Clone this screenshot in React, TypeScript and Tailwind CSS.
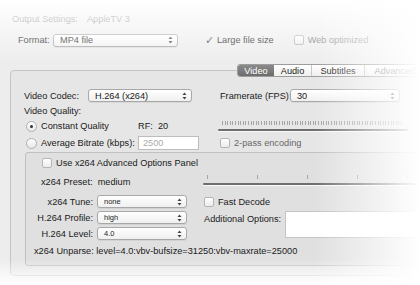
import React from "react";

function Arrows() {
  return (
    <svg width="5" height="8" viewBox="0 0 5 8" className="shrink-0">
      <path d="M2.5 0.5 L4.5 3 L0.5 3 Z" fill="#444" />
      <path d="M2.5 7.5 L4.5 5 L0.5 5 Z" fill="#444" />
    </svg>
  );
}

function Popup({
  text,
  className,
  small,
}: {
  text: string;
  className: string;
  small?: boolean;
}) {
  return (
    <div
      className={`flex h-[13px] items-center justify-between rounded-[3px] border border-[#a8a8a8] bg-gradient-to-b from-white to-[#f0f0f0] pl-[6px] pr-[4px] shadow-[0_1px_0_rgba(0,0,0,0.06)] ${className}`}
    >
      <span className={small ? "text-[7.5px]" : ""}>{text}</span>
      <Arrows />
    </div>
  );
}

function Check({ on }: { on?: boolean }) {
  return (
    <span className="flex h-[10px] w-[10px] shrink-0 items-center justify-center rounded-[2px] border border-[#b5b5b5] bg-gradient-to-b from-white to-[#ececec]">
      {on && <span className="text-[9px] leading-none text-[#333]">✓</span>}
    </span>
  );
}

function Radio({ on }: { on?: boolean }) {
  return (
    <span className="flex h-[11px] w-[11px] shrink-0 items-center justify-center rounded-full border border-[#b0b0b0] bg-gradient-to-b from-white to-[#e8e8e8]">
      {on && <span className="h-[3px] w-[3px] rounded-full bg-[#333]" />}
    </span>
  );
}

function Slider({ ticks, gap }: { ticks: number; gap: string }) {
  return (
    <div className="flex flex-col">
      <div className={`flex h-[5px] items-start pl-[4px] ${gap}`}>
        {Array.from({ length: ticks }).map((_, i) => (
          <span key={i} className="h-[4px] w-px shrink-0 bg-[#a5a5a5]" />
        ))}
      </div>
      <div className="mt-[3px] h-[2px] w-full rounded-full bg-[#6e6e6e] shadow-[0_1px_0_#fafafa]" />
    </div>
  );
}

export default function App() {
  return (
    <div className="relative h-[285px] w-[420px] overflow-hidden whitespace-nowrap bg-[#ededed] font-['Liberation_Sans',Arial,sans-serif] text-[9.2px] leading-[12px] text-[#1a1a1a]">
      <div className="flex gap-[9px] pl-[12px] pt-[13px] text-[#666]">
        <span>Output Settings:</span>
        <span>AppleTV 3</span>
      </div>

      <div className="mt-[8px] flex h-[14px] items-center pl-[18px]">
        <span className="w-[35px]">Format:</span>
        <Popup text="MP4 file" className="w-[125px]" />
        <span className="ml-[27px] text-[11px] text-[#444]">✓</span>
        <span className="ml-[3px]">Large file size</span>
        <span className="ml-[20px]">
          <Check />
        </span>
        <span className="ml-[4px] text-[#777]">Web optimized</span>
      </div>

      <div className="ml-[10px] mt-[23px] w-[440px] rounded-[4px] border border-[#c4c4c4] bg-[#e6e6e6] pb-[9px]">
        <div className="-mt-[7px] flex h-[13px] pl-[226px]">
          <div className="flex overflow-hidden rounded-[3px] border border-[#9d9d9d] bg-gradient-to-b from-white to-[#efefef]">
            <span className="flex w-[36px] items-center justify-center bg-gradient-to-b from-[#8a8a8a] to-[#6d6d6d] text-white">
              Video
            </span>
            <span className="flex w-[38px] items-center justify-center border-r border-[#c8c8c8]">
              Audio
            </span>
            <span className="flex w-[53px] items-center justify-center border-r border-[#c8c8c8]">
              Subtitles
            </span>
            <span className="flex w-[60px] items-center justify-center text-[#666]">
              Advanced
            </span>
          </div>
        </div>

        <div className="mt-[12px] flex h-[13px] items-center pl-[13px]">
          <span className="w-[64px]">Video Codec:</span>
          <Popup text="H.264 (x264)" className="w-[104px]" />
          <span className="ml-[28px] w-[70px]">Framerate (FPS):</span>
          <Popup text="30" className="w-[110px]" />
        </div>

        <div className="mt-[3px] pl-[13px]">Video Quality:</div>

        <div className="mt-[3px] flex">
          <div className="flex w-[196px] flex-col gap-[4px] pl-[15px]">
            <div className="flex h-[12px] items-center">
              <Radio on />
              <span className="ml-[4px] w-[97px]">Constant Quality</span>
              <span>RF:&nbsp;&nbsp;20</span>
            </div>
            <div className="flex h-[14px] items-center">
              <Radio />
              <span className="ml-[4px] w-[97px]">Average Bitrate (kbps):</span>
              <div className="flex h-[14px] w-[61px] items-center border border-[#bdbdbd] bg-white pl-[4px] text-[#aaa]">
                2500
              </div>
            </div>
          </div>
          <div className="ml-[11px] flex w-[190px] flex-col">
            <div className="mt-[1px]">
              <Slider ticks={70} gap="gap-[1.6px]" />
            </div>
            <div className="mt-[6px] flex items-center gap-[4px] pl-[2px] text-[#666]">
              <Check />
              <span>2-pass encoding</span>
            </div>
          </div>
        </div>

        <div className="ml-[14px] mt-[2px] rounded-[3px] border border-[#c0c0c0] bg-[#e0e0e0] pb-[8px] pt-[4px]">
          <div className="flex h-[12px] items-center gap-[4px] pl-[16px]">
            <Check />
            <span>Use x264 Advanced Options Panel</span>
          </div>

          <div className="mt-[6px] flex">
            <div className="w-[177px] pl-[15px] pt-[1px]">x264 Preset:&nbsp; medium</div>
            <div className="w-[220px]">
              <Slider ticks={5} gap="gap-[49px]" />
            </div>
          </div>

          <div className="mt-[7px] flex">
            <div className="grid grid-cols-[59px_90px] items-center gap-x-[4px] gap-y-[3px] pl-[8px]">
              <span className="text-right">x264 Tune:</span>
              <Popup text="none" small className="w-[90px]" />
              <span className="text-right">H.264 Profile:</span>
              <Popup text="high" small className="w-[90px]" />
              <span className="text-right">H.264 Level:</span>
              <Popup text="4.0" small className="w-[90px]" />
            </div>
            <div className="ml-[17px] flex flex-col">
              <div className="flex h-[13px] items-center gap-[4px]">
                <Check />
                <span>Fast Decode</span>
              </div>
              <div className="mt-[3px] flex items-start">
                <span className="w-[81px] pt-[2px]">Additional Options:</span>
                <div className="h-[27px] w-[160px] border border-[#c4c4c4] bg-white" />
              </div>
            </div>
          </div>

          <div className="mt-[5px] pl-[8px]">
            x264 Unparse: level=4.0:vbv-bufsize=31250:vbv-maxrate=25000
          </div>
        </div>
      </div>

      {/* fades over the screenshot edges */}
      <div className="pointer-events-none absolute inset-x-0 top-0 h-[62px] bg-gradient-to-b from-white to-transparent" />
      <div className="pointer-events-none absolute inset-y-0 right-0 w-[105px] bg-gradient-to-r from-transparent to-white" />
      <div className="pointer-events-none absolute inset-x-0 bottom-0 h-[26px] bg-gradient-to-t from-white to-transparent" />
    </div>
  );
}
